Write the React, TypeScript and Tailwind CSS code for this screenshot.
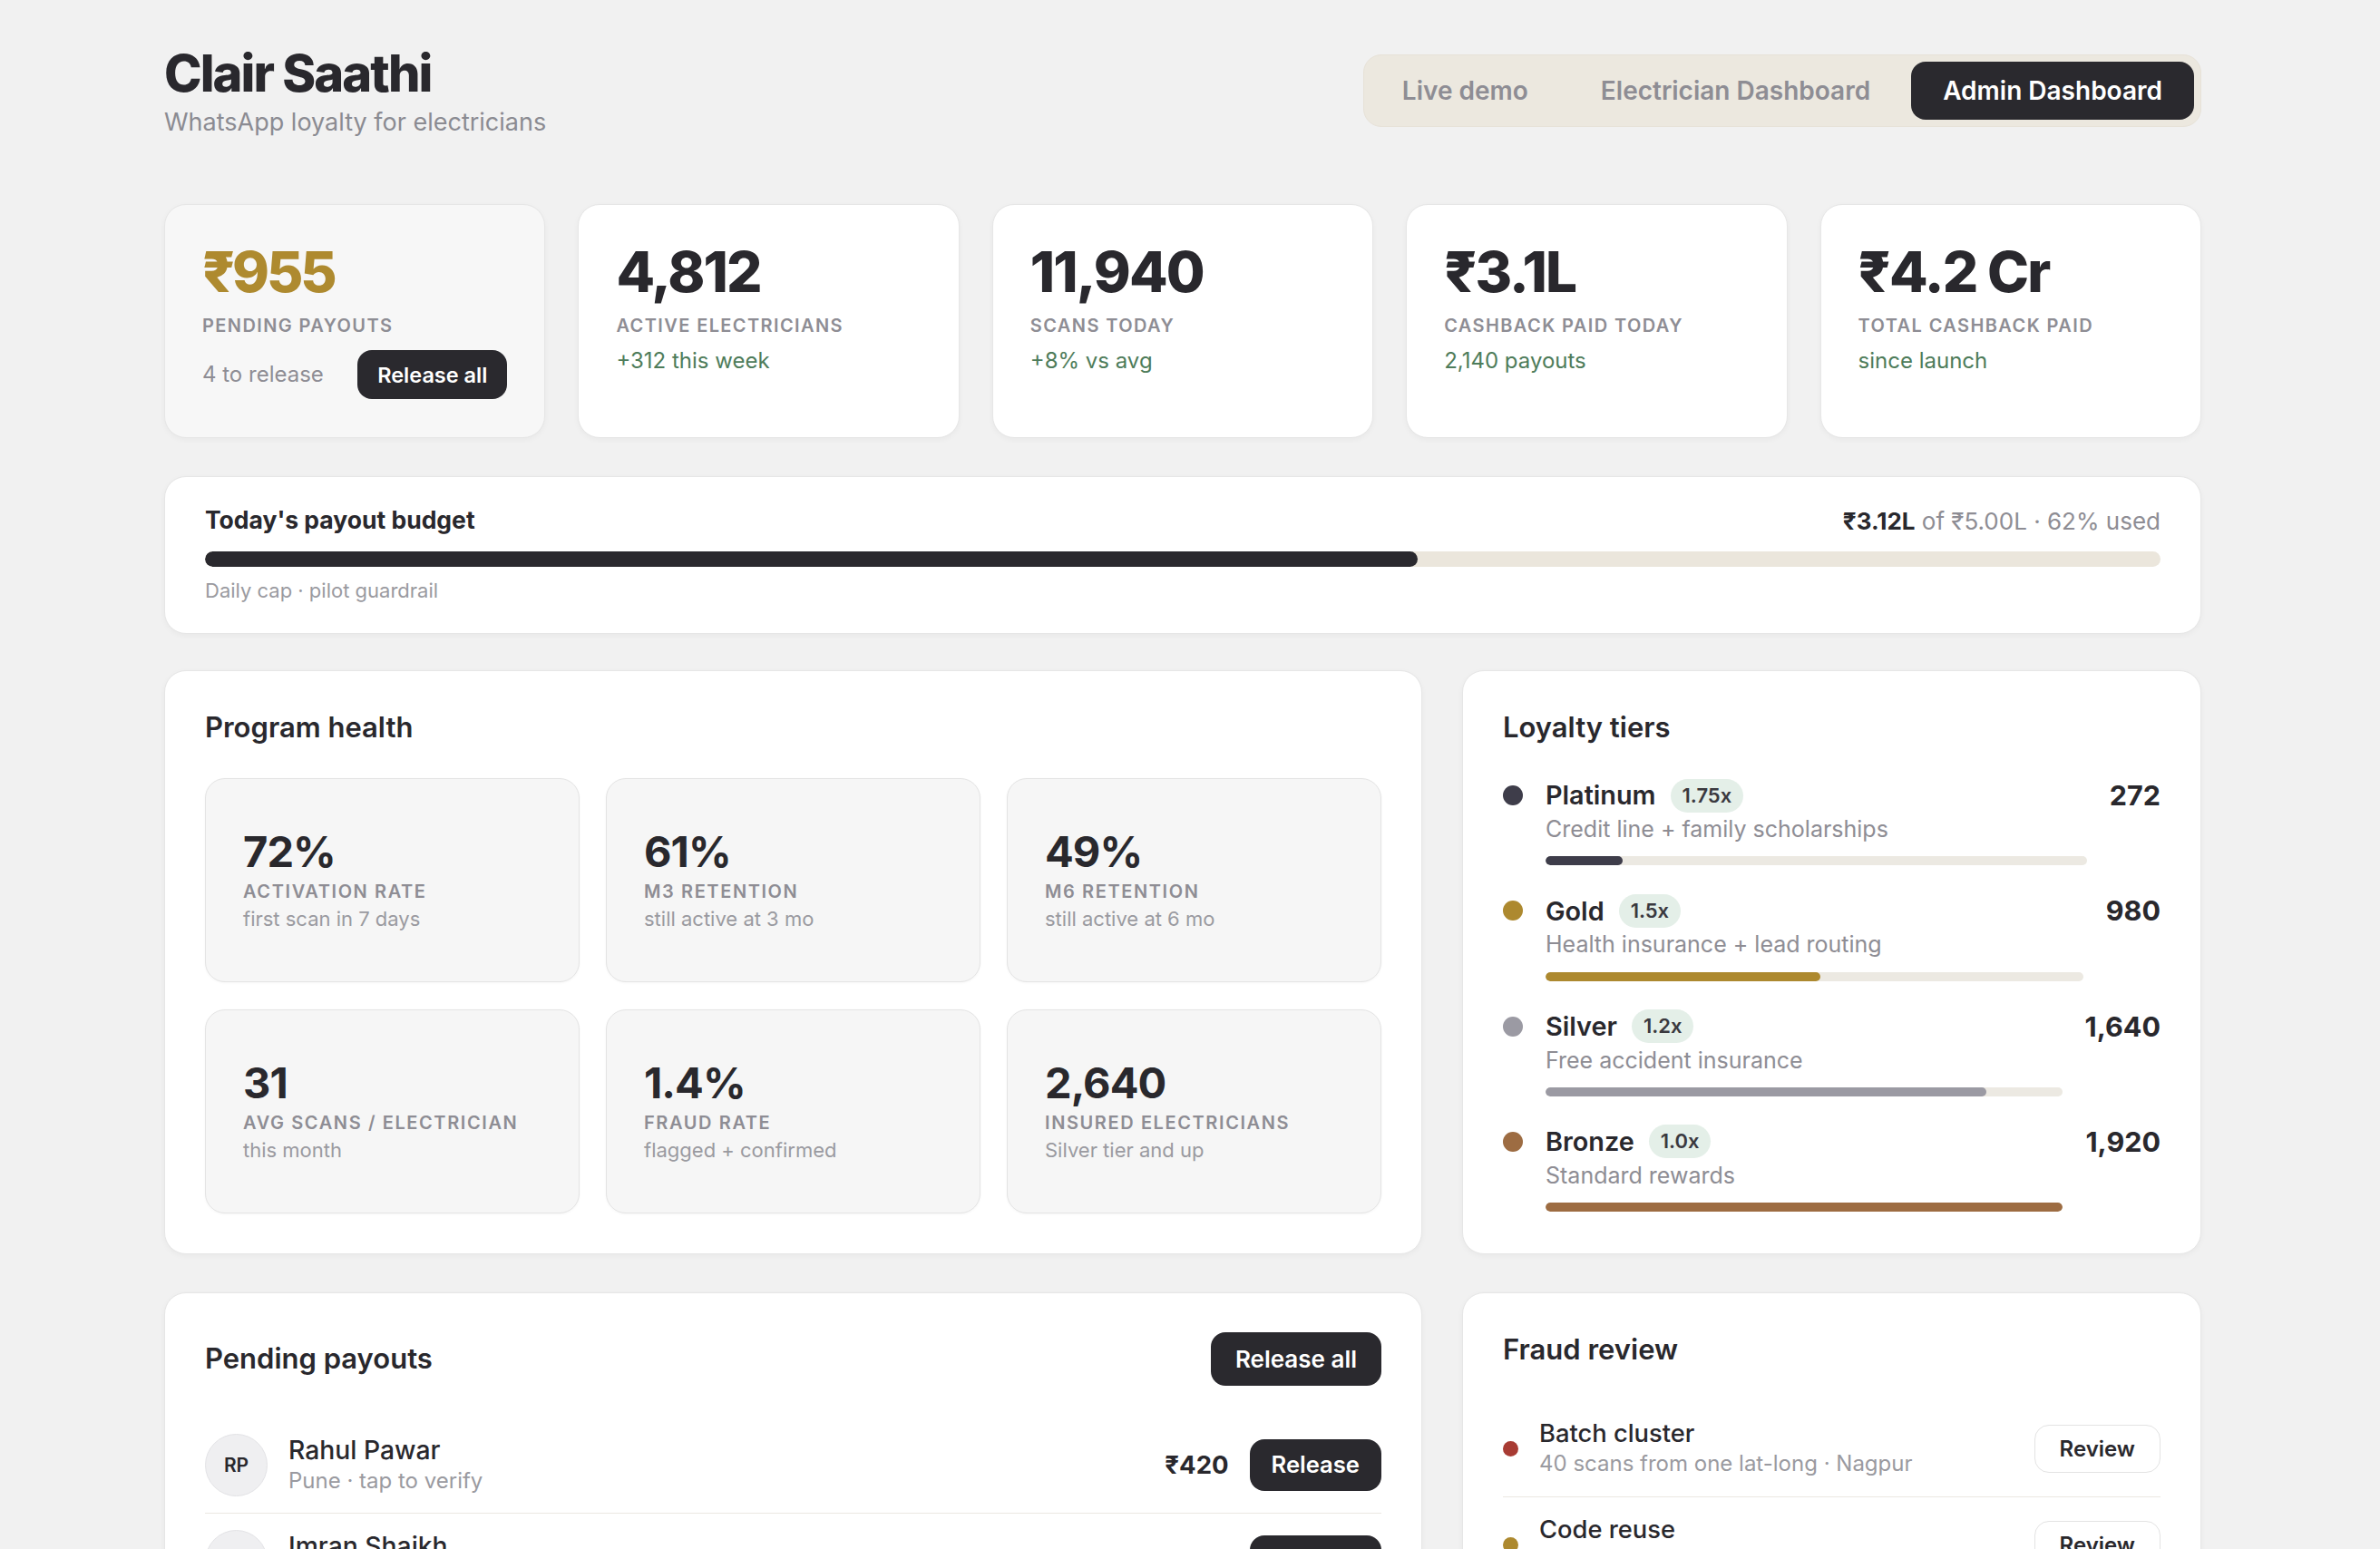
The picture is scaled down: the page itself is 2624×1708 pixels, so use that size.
import React from "react";

const tiers = [
  { name: "Platinum", mult: "1.75x", desc: "Credit line + family scholarships", count: 272, color: "#3e3d4a" },
  { name: "Gold", mult: "1.5x", desc: "Health insurance + lead routing", count: 980, color: "#ad892f" },
  { name: "Silver", mult: "1.2x", desc: "Free accident insurance", count: 1640, color: "#9b9aa3" },
  { name: "Bronze", mult: "1.0x", desc: "Standard rewards", count: 1920, color: "#9d6c42" },
];

const health = [
  { v: "72%", l: "Activation rate", s: "first scan in 7 days" },
  { v: "61%", l: "M3 retention", s: "still active at 3 mo" },
  { v: "49%", l: "M6 retention", s: "still active at 6 mo" },
  { v: "31", l: "Avg scans / electrician", s: "this month" },
  { v: "1.4%", l: "Fraud rate", s: "flagged + confirmed" },
  { v: "2,640", l: "Insured electricians", s: "Silver tier and up" },
];

const payouts = [
  { i: "RP", n: "Rahul Pawar", s: "Pune · tap to verify", a: "₹420" },
  { i: "IS", n: "Imran Shaikh", s: "Nashik · tap to verify", a: "₹215" },
  { i: "SK", n: "Suresh Kale", s: "Nagpur · tap to verify", a: "₹180" },
  { i: "AD", n: "Amit Deshmukh", s: "Aurangabad · tap to verify", a: "₹140" },
];

const fraud = [
  { n: "Batch cluster", s: "40 scans from one lat-long · Nagpur", c: "#a83b33" },
  { n: "Code reuse", s: "Same code scanned by 3 accounts · Pune", c: "#ad892f" },
  { n: "Velocity spike", s: "120 scans in 10 min · Nashik", c: "#ad892f" },
];

const max = 1920;

function StatCard({ value, label, sub, first }: { value: string; label: string; sub?: string; first?: boolean }) {
  return (
    <div
      className={`rounded-[24px] border border-[#e6e6e6] px-[41px] pt-[43px] pb-[42px] shadow-[0_2px_6px_rgba(0,0,0,0.04)] ${
        first ? "bg-[#f7f7f7]" : "bg-white"
      }`}
    >
      <div
        className={`text-[62px] font-extrabold leading-none ${
          first ? "tracking-[-0.05em] text-[#ae8a2f]" : "tracking-[-0.03em] text-[#29282d]"
        }`}
      >
        {value}
      </div>
      <div className="mt-[13px] text-[20px] font-semibold uppercase leading-[1.5] tracking-[0.07em] text-[#8e8d94]">{label}</div>
      {first ? (
        <div className="mt-[12px] flex items-center justify-between">
          <span className="text-[24px] text-[#8e8d94]">4 to release</span>
          <button className="h-[54px] rounded-[16px] bg-[#2a292e] px-[22px] text-[23.5px] font-semibold text-white">Release all</button>
        </div>
      ) : (
        <div className="mt-[6px] text-[24px] leading-[1.5] text-[#4e7c5a]">{sub}</div>
      )}
    </div>
  );
}

export default function App() {
  return (
    <div className="min-h-screen bg-[#f1f1f1] pb-[80px] text-[#29282d] [font-family:Inter,'Noto_Sans',sans-serif]">
      <div className="ml-[181px] w-[2246px] pt-[50px]">
        {/* Header */}
        <div className="flex items-start justify-between">
          <div>
            <h1 className="text-[56px] font-extrabold leading-[1.14] tracking-[-0.035em] text-[#29282d]">Clair Saathi</h1>
            <p className="mt-[1px] text-[27px] leading-[1.5] text-[#8b8b92]">WhatsApp loyalty for electricians</p>
          </div>
          <div className="mt-[10px] flex gap-[10px] rounded-[20px] border border-[#e7e2d8] bg-[#ece8df] p-[7px]">
            <button className="h-[64px] rounded-[16px] px-[35px] text-[28px] font-semibold text-[#8e8d94]">Live demo</button>
            <button className="h-[64px] rounded-[16px] px-[35px] text-[28px] font-semibold text-[#8e8d94]">Electrician Dashboard</button>
            <button className="h-[64px] rounded-[16px] bg-[#2a292e] px-[35px] text-[28px] font-semibold text-white">Admin Dashboard</button>
          </div>
        </div>

        {/* Stats */}
        <div className="mt-[70px] grid grid-cols-5 gap-[36px]">
          <StatCard first value="₹955" label="Pending payouts" />
          <StatCard value="4,812" label="Active electricians" sub="+312 this week" />
          <StatCard value="11,940" label="Scans today" sub="+8% vs avg" />
          <StatCard value="₹3.1L" label="Cashback paid today" sub="2,140 payouts" />
          <StatCard value="₹4.2 Cr" label="Total cashback paid" sub="since launch" />
        </div>

        {/* Budget */}
        <div className="mt-[42px] rounded-[24px] border border-[#e6e6e6] bg-white px-[44px] pt-[28px] pb-[30px] shadow-[0_2px_6px_rgba(0,0,0,0.04)]">
          <div className="flex items-center justify-between">
            <span className="text-[26.5px] font-bold leading-[1.5]">Today's payout budget</span>
            <span className="text-[26px] leading-[1.5] text-[#8e8d94]">
              <span className="font-bold text-[#29282d]">₹3.12L</span> of ₹5.00L · 62% used
            </span>
          </div>
          <div className="mt-[14px] h-[17px] w-full overflow-hidden rounded-full bg-[#ebe6dc]">
            <div className="h-full rounded-full bg-[#2a292e]" style={{ width: "62%" }} />
          </div>
          <div className="mt-[10px] text-[22px] leading-[1.5] text-[#9a9aa0]">Daily cap · pilot guardrail</div>
        </div>

        {/* Middle row */}
        <div className="mt-[40px] grid grid-cols-[1fr_815px] gap-[44px]">
          <div className="rounded-[24px] border border-[#e6e6e6] bg-white px-[44px] pt-[40px] pb-[44px] shadow-[0_2px_6px_rgba(0,0,0,0.04)]">
            <h2 className="text-[31px] font-semibold leading-[1.45]">Program health</h2>
            <div className="mt-[33px] grid grid-cols-3 gap-x-[29px] gap-y-[30px]">
              {health.map((h) => (
                <div
                  key={h.l}
                  className="flex h-[225px] flex-col justify-center rounded-[22px] border border-[#e4e4e4] bg-[#f6f6f6] px-[41px] pt-[4px] shadow-[0_1px_3px_rgba(0,0,0,0.04)]"
                >
                  <div className="text-[47px] font-bold leading-none tracking-[-0.02em]">{h.v}</div>
                  <div className="mt-[6px] text-[20px] font-semibold uppercase leading-[1.5] tracking-[0.08em] text-[#8e8d94]">{h.l}</div>
                  <div className="text-[22px] leading-[1.45] text-[#9a9aa0]">{h.s}</div>
                </div>
              ))}
            </div>
          </div>

          <div className="rounded-[24px] border border-[#e6e6e6] bg-white px-[44px] pt-[40px] pb-[44px] shadow-[0_2px_6px_rgba(0,0,0,0.04)]">
            <h2 className="text-[31px] font-semibold leading-[1.45]">Loyalty tiers</h2>
            <div className="mt-[33px] flex flex-col gap-[31px]">
              {tiers.map((t) => (
                <div key={t.name} className="flex items-start gap-[25px]">
                  <div className="flex h-[38px] items-center">
                    <span className="block h-[22px] w-[22px] rounded-full" style={{ backgroundColor: t.color }} />
                  </div>
                  <div className="flex-1">
                    <div className="flex h-[38px] items-center gap-[16px]">
                      <span className="text-[28.8px] font-semibold">{t.name}</span>
                      <span className="rounded-full bg-[#e4efe8] px-[13px] py-[2px] text-[22px] font-semibold text-[#3a393f]">{t.mult}</span>
                    </div>
                    <div className="text-[25px] leading-[1.45] text-[#8e8d94]">{t.desc}</div>
                    <div className="mt-[12px] h-[10px] w-full overflow-hidden rounded-full bg-[#ece9e2]">
                      <div className="h-full rounded-full" style={{ width: `${(t.count / max) * 100}%`, backgroundColor: t.color }} />
                    </div>
                  </div>
                  <div className="flex h-[38px] items-center text-[30.5px] font-bold">{t.count.toLocaleString("en-US")}</div>
                </div>
              ))}
            </div>
          </div>
        </div>

        {/* Bottom row */}
        <div className="mt-[42px] grid grid-cols-[1fr_815px] gap-[44px]">
          <div className="rounded-[24px] border border-[#e6e6e6] bg-white px-[44px] pt-[43px] pb-[44px] shadow-[0_2px_6px_rgba(0,0,0,0.04)]">
            <div className="flex items-center justify-between">
              <h2 className="text-[31px] font-semibold leading-[1.45]">Pending payouts</h2>
              <button className="h-[59px] rounded-[16px] bg-[#2a292e] px-[27px] text-[26px] font-semibold text-white">Release all</button>
            </div>
            <div className="mt-[35px] flex flex-col">
              {payouts.map((p) => (
                <div key={p.n} className="flex items-center gap-[23px] border-b border-[#ebe8e2] py-[18px]">
                  <div className="flex h-[69px] w-[69px] items-center justify-center rounded-full border border-[#e3e3e6] bg-[#efeff1] text-[21px] font-semibold">
                    {p.i}
                  </div>
                  <div className="flex-1">
                    <div className="text-[28.3px] font-medium leading-[1.2]">{p.n}</div>
                    <div className="text-[24px] leading-[1.3] text-[#9a9aa0]">{p.s}</div>
                  </div>
                  <div className="text-[27.5px] font-bold">{p.a}</div>
                  <button className="h-[57px] rounded-[16px] bg-[#2a292e] px-[24px] text-[25.6px] font-semibold text-white">Release</button>
                </div>
              ))}
            </div>
          </div>

          <div className="rounded-[24px] border border-[#e6e6e6] bg-white px-[44px] pt-[40px] pb-[44px] shadow-[0_2px_6px_rgba(0,0,0,0.04)]">
            <h2 className="text-[31px] font-semibold leading-[1.45]">Fraud review</h2>
            <div className="mt-[34px] flex flex-col">
              {fraud.map((f, i) => (
                <div key={f.n} className={`flex items-center gap-[23px] py-[20px] ${i < fraud.length - 1 ? "border-b border-[#ebe8e2]" : ""}`}>
                  <span className="block h-[17px] w-[17px] rounded-full" style={{ backgroundColor: f.c }} />
                  <div className="flex-1">
                    <div className="text-[27.3px] font-medium leading-[1.2]">{f.n}</div>
                    <div className="text-[24px] leading-[1.35] text-[#9a9aa0]">{f.s}</div>
                  </div>
                  <button className="h-[53px] rounded-[16px] border border-[#e3e3e3] bg-white px-[27px] text-[24px] font-semibold">Review</button>
                </div>
              ))}
            </div>
          </div>
        </div>
      </div>
    </div>
  );
}
